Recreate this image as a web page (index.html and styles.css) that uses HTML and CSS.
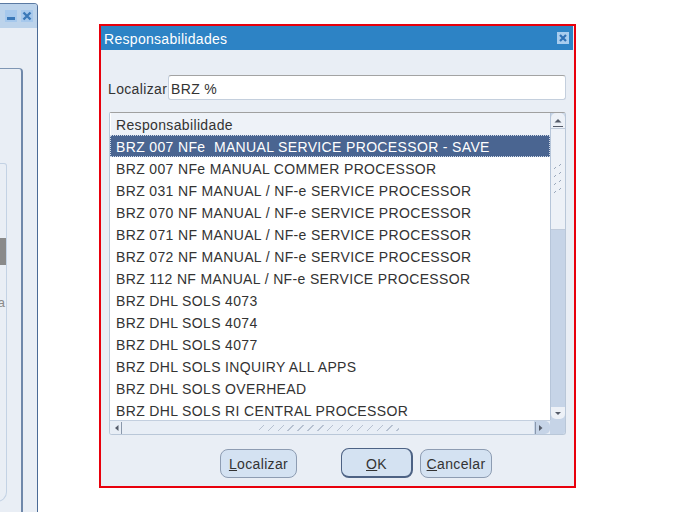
FILE: index.html
```html
<!DOCTYPE html>
<html>
<head>
<meta charset="utf-8">
<link rel="stylesheet" href="styles.css">
</head>
<body>
<div class="desktop">
  <div class="bgwin">
    <div class="bgwin-title">
      <span class="wbtn"><svg width="12" height="12" viewBox="0 0 12 12"><rect x="2" y="7" width="8" height="3" fill="#3a78b8"/></svg></span>
      <span class="wbtn"><svg width="12" height="12" viewBox="0 0 12 12"><path d="M2.5 2.5 L9.5 9.5 M9.5 2.5 L2.5 9.5" stroke="#3a78b8" stroke-width="2.4"/></svg></span>
    </div>
    <div class="bgwin-body">
      <div class="bgpanel">
        <div class="bgbox">
          <div class="graybar"></div>
          <div class="clip">a</div>
        </div>
      </div>
    </div>
  </div>

  <div class="dialog">
    <div class="titlebar">
      <span class="title">Responsabilidades</span>
      <span class="closebtn"><svg width="12" height="12" viewBox="0 0 12 12"><path d="M3 3 L9 9 M9 3 L3 9" stroke="#2f72b6" stroke-width="2.2"/></svg></span>
    </div>
    <div class="content">
      <div class="findrow">
        <span class="label">Localizar</span>
        <div class="input">BRZ %</div>
      </div>
      <div class="listbox">
        <div class="rows">
          <div class="header">Responsabilidade</div>
          <div class="row selected">BRZ 007 NFe&nbsp; MANUAL SERVICE PROCESSOR - SAVE</div>
          <div class="row">BRZ 007 NFe MANUAL COMMER PROCESSOR</div>
          <div class="row">BRZ 031 NF MANUAL / NF-e SERVICE PROCESSOR</div>
          <div class="row">BRZ 070 NF MANUAL / NF-e SERVICE PROCESSOR</div>
          <div class="row">BRZ 071 NF MANUAL / NF-e SERVICE PROCESSOR</div>
          <div class="row">BRZ 072 NF MANUAL / NF-e SERVICE PROCESSOR</div>
          <div class="row">BRZ 112 NF MANUAL / NF-e SERVICE PROCESSOR</div>
          <div class="row">BRZ DHL SOLS 4073</div>
          <div class="row">BRZ DHL SOLS 4074</div>
          <div class="row">BRZ DHL SOLS 4077</div>
          <div class="row">BRZ DHL SOLS INQUIRY ALL APPS</div>
          <div class="row">BRZ DHL SOLS OVERHEAD</div>
          <div class="row">BRZ DHL SOLS RI CENTRAL PROCESSOR</div>
        </div>
        <div class="vscroll">
          <div class="vbtn up"><svg width="14" height="14" viewBox="0 0 14 14"><path d="M3.5 8.5 L7 5 L10.5 8.5 Z" fill="#555c6a"/><rect x="2" y="12" width="10" height="1" fill="#555c6a"/></svg></div>
          <div class="vthumb"><svg width="8" height="30" viewBox="0 0 8 30"><g fill="#9aa8bc"><rect x="0" y="4" width="1" height="1"/><rect x="1" y="3" width="1" height="1"/><rect x="5" y="1" width="1" height="1"/><rect x="6" y="0" width="1" height="1"/><rect x="0" y="12" width="1" height="1"/><rect x="1" y="11" width="1" height="1"/><rect x="5" y="9" width="1" height="1"/><rect x="6" y="8" width="1" height="1"/><rect x="0" y="20" width="1" height="1"/><rect x="1" y="19" width="1" height="1"/><rect x="5" y="17" width="1" height="1"/><rect x="6" y="16" width="1" height="1"/><rect x="0" y="28" width="1" height="1"/><rect x="1" y="27" width="1" height="1"/><rect x="5" y="25" width="1" height="1"/><rect x="6" y="24" width="1" height="1"/></g></svg></div>
          <div class="vtrack"></div>
          <div class="vbtn down"><svg width="14" height="12" viewBox="0 0 14 12"><path d="M4 5 L7 8 L10 5 Z" fill="#555c6a"/></svg></div>
        </div>
        <div class="hscroll">
          <div class="hbtn left"><svg width="12" height="12" viewBox="0 0 12 12"><path d="M7.5 3 L4 6 L7.5 9 Z" fill="#555c6a"/><rect x="10" y="0" width="1" height="12" fill="#8a98ac"/></svg></div>
          <div class="hthumb"><div class="grip"></div></div>
          <div class="hbtn right"><svg width="14" height="12" viewBox="0 0 14 12"><rect x="1" y="0" width="1" height="12" fill="#8a98ac"/><path d="M5 3 L8.5 6 L5 9 Z" fill="#555c6a"/></svg></div>
        </div>
        <div class="corner"></div>
      </div>
      <div class="buttons">
        <button class="btn find"><u>L</u>ocalizar</button>
        <button class="btn ok"><u>O</u>K</button>
        <button class="btn cancel"><u>C</u>ancelar</button>
      </div>
    </div>
  </div>
</div>
</body>
</html>
```

FILE: styles.css
```css
html, body {
  margin: 0;
  padding: 0;
  background: #ffffff;
}
body {
  font-family: "Liberation Sans", Arial, sans-serif;
  font-size: 14px;
  letter-spacing: 0.35px;
  color: #333333;
}
.desktop {
  position: relative;
  width: 675px;
  height: 512px;
  overflow: hidden;
  background: #ffffff;
}

/* background window */
.bgwin {
  position: absolute;
  left: -200px;
  top: 3px;
  width: 237px;
  height: 530px;
  background: #e9eef5;
  border-top: 1px solid #5a7aa3;
  border-right: 1px solid #4a6a96;
  border-top-right-radius: 4px;
  display: flex;
  flex-direction: column;
}
.bgwin-title {
  height: 24px;
  background: #bcd3eb;
  display: flex;
  justify-content: flex-end;
  align-items: center;
  gap: 4px;
  padding-right: 4px;
  border-top-right-radius: 3px;
}
.wbtn {
  width: 12px;
  height: 12px;
  background: #a6c8ec;
  display: block;
}
.wbtn svg { display: block; }
.bgwin-body {
  flex: 1;
  padding-top: 40px;
  padding-right: 14px;
  display: flex;
  flex-direction: column;
}
.bgpanel {
  flex: 1;
  border-top: 1px solid #7f96b4;
  border-right: 2px solid #6f88aa;
  border-top-right-radius: 4px;
  padding-top: 94px;
  padding-right: 14px;
  display: flex;
  flex-direction: column;
}
.bgbox {
  height: 337px;
  border: 1px solid #c3d2e4;
  border-left: none;
  border-radius: 0 3px 10px 0;
  position: relative;
}
.graybar {
  position: absolute;
  right: 0;
  top: 74px;
  width: 6px;
  height: 27px;
  background: #8a8a8a;
}
.clip {
  position: absolute;
  right: 1px;
  top: 131px;
  font-size: 13px;
  letter-spacing: 0;
  color: #8a8a8a;
  line-height: 15px;
}

/* dialog */
.dialog {
  position: absolute;
  left: 99px;
  top: 24px;
  width: 477px;
  height: 464px;
  box-sizing: border-box;
  border: 2px solid #e8000c;
  background: #e9eef5;
  display: flex;
  flex-direction: column;
}
.titlebar {
  height: 24px;
  background: #2d83c5;
  color: #ffffff;
  display: flex;
  align-items: center;
  justify-content: space-between;
  padding: 0 4px 0 3px;
  margin-right: 1px;
}
.title {
  font-size: 14px;
  letter-spacing: 0.3px;
  padding-top: 2px;
}
.closebtn {
  width: 12px;
  height: 12px;
  background: #a8cdee;
  display: block;
}
.closebtn svg { display: block; }

.content {
  flex: 1;
  padding: 25px 8px 0 7px;
  display: flex;
  flex-direction: column;
}
.findrow {
  display: flex;
  align-items: center;
  height: 25px;
}
.label {
  width: 60px;
  color: #333333;
  padding-top: 2px;
}
.input {
  flex: 1;
  height: 25px;
  box-sizing: border-box;
  background: #ffffff;
  border: 1px solid #c4cfdd;
  border-top-color: #a3a3a3;
  border-radius: 3px;
  padding: 2px 0 0 2px;
  display: flex;
  align-items: center;
  color: #333333;
}

.listbox {
  margin: 12px 0 0 1px;
  height: 323px;
  box-sizing: border-box;
  border: 1px solid #b9c7d8;
  border-top-color: #a0a0a0;
  border-radius: 2px 3px 3px 3px;
  background: #ffffff;
  display: grid;
  grid-template-columns: 1fr 15px;
  grid-template-rows: 1fr 14px;
  overflow: hidden;
}
.rows {
  overflow: hidden;
}
.header {
  height: 22px;
  box-sizing: border-box;
  background: #eef2f8;
  border-left: 1px solid #ffffff;
  padding: 2px 0 0 5px;
  display: flex;
  align-items: center;
  color: #333333;
}
.row {
  height: 22px;
  box-sizing: border-box;
  padding: 2px 0 0 6px;
  display: flex;
  align-items: center;
  white-space: nowrap;
  color: #333333;
}
.row.selected {
  background: #4a6591;
  color: #ffffff;
  outline: 1px dotted #d0dae8;
  outline-offset: -1px;
}

.vscroll {
  display: flex;
  flex-direction: column;
  background: #c6d4e7;
  border-left: 1px solid #b6c5d9;
}
.vbtn {
  background: #edf1f7;
  display: flex;
  justify-content: center;
}
.vbtn.up {
  height: 15px;
  border-radius: 5px 5px 0 0;
  align-items: center;
}
.vbtn.down {
  height: 12px;
  border-radius: 0 0 5px 5px;
  align-items: center;
  margin-bottom: 1px;
}
.vbtn svg { display: block; }
.vthumb {
  height: 100px;
  background: #edf1f7;
  border-top: 1px solid #c0cbdb;
  border-bottom: 1px solid #c0cbdb;
  display: flex;
  justify-content: center;
  align-items: center;
}
.vthumb svg { display: block; }
.vtrack {
  flex: 1;
}

.hscroll {
  display: flex;
  background: #e8eef6;
  border-top: 1px solid #c3cfdf;
}
.hbtn {
  display: flex;
  align-items: center;
}
.hbtn svg { display: block; }
.hbtn.left {
  width: 14px;
  justify-content: center;
  border-radius: 5px 0 0 5px;
}
.hbtn.right {
  width: 16px;
  background: #c6d4e7;
  border-radius: 0 5px 5px 0;
}
.hthumb {
  flex: 1;
  display: flex;
  justify-content: center;
  align-items: center;
}
.grip {
  width: 140px;
  height: 6px;
  margin-left: 0;
  background-image: repeating-linear-gradient(135deg, transparent 0 3px, #aab6c8 3px 4px, transparent 4px 7px);
  opacity: 0.8;
}
.corner {
  background: #c6d4e7;
}

.buttons {
  display: flex;
  align-items: center;
  padding-left: 112px;
  margin-top: 13px;
  height: 30px;
}
.btn {
  font-family: "Liberation Sans", Arial, sans-serif;
  font-size: 14px;
  letter-spacing: 0.35px;
  color: #333333;
  background: #d4e2f2;
  border: 1px solid #8d9cb2;
  border-radius: 8px;
  height: 29px;
  padding: 2px 0 0 0;
  margin: 0;
  box-sizing: border-box;
}
.btn.find {
  width: 77px;
}
.btn.ok {
  width: 72px;
  height: 30px;
  margin-left: 44px;
  border-color: #4d6284;
  border-width: 1px 2px 2px 1px;
}
.btn.cancel {
  width: 72px;
  margin-left: 7px;
}
```
